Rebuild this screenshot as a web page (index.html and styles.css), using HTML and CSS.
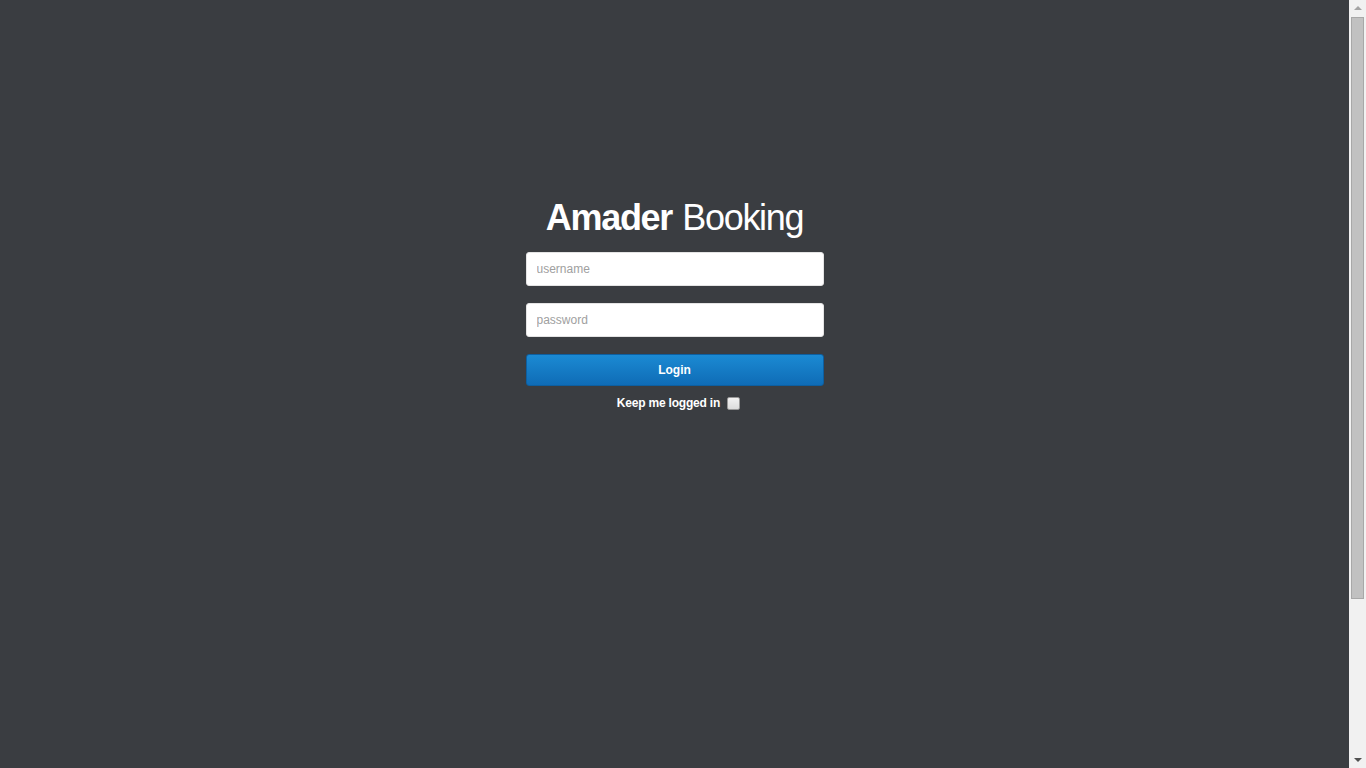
FILE: index.html
```html
<!DOCTYPE html>
<html>
<head>
<meta charset="utf-8">
<title>Amader Booking</title>
<link rel="stylesheet" href="styles.css">
</head>
<body>
<div class="page">
  <form class="login">
    <h1 class="title"><b>Amader</b> Booking</h1>
    <input class="field" type="text" placeholder="username">
    <input class="field" type="password" placeholder="password">
    <button class="btn" type="button">Login</button>
    <label class="keep">Keep me logged in <span class="box"></span></label>
  </form>
</div>
<div class="scrollbar" aria-hidden="true">
  <span class="arrow up"></span>
  <span class="thumb"></span>
  <span class="arrow down"></span>
</div>
</body>
</html>
```

FILE: styles.css
```css
html, body {
  margin: 0;
  padding: 0;
  background: #3a3d41;
  overflow: hidden;
}
body {
  font-family: "Liberation Sans", Arial, sans-serif;
  padding-right: 17px;
}
.page {
  height: 768px;
  display: flex;
  justify-content: center;
}
.login {
  width: 298px;
  margin-top: 196px;
  display: flex;
  flex-direction: column;
  align-items: stretch;
}
.title {
  margin: 0 0 14px;
  font-size: 36px;
  line-height: 43px;
  font-weight: normal;
  color: #fff;
  text-align: center;
  letter-spacing: -1.3px;
  word-spacing: 1.5px;
}
.title b {
  font-weight: bold;
}
.field {
  box-sizing: border-box;
  height: 34px;
  margin: -1px 0 18px;
  padding: 0 10px;
  border: 1px solid #e4e4e4;
  border-radius: 3px;
  background: #fff;
  font-family: "Liberation Sans", Arial, sans-serif;
  font-size: 12px;
  color: #333;
  outline: none;
}
.field::placeholder {
  color: #a0a0a0;
}
.btn {
  box-sizing: border-box;
  height: 32px;
  margin: -1px 0 0;
  padding: 0;
  border: 1px solid #0d5fa0;
  border-radius: 3px;
  background: linear-gradient(#1b8ad3, #0f6cb6);
  color: #fff;
  font-family: "Liberation Sans", Arial, sans-serif;
  font-size: 12px;
  font-weight: bold;
  cursor: pointer;
}
.keep {
  margin-top: 10px;
  padding-left: 8px;
  display: flex;
  justify-content: center;
  align-items: center;
  gap: 7px;
  color: #fff;
  font-size: 12px;
  font-weight: bold;
  letter-spacing: -0.2px;
}
.box {
  width: 11px;
  height: 11px;
  border: 1px solid #999;
  border-radius: 2px;
  background: linear-gradient(#f2f2f2, #dcdcdc);
}
.scrollbar {
  position: fixed;
  top: 0;
  right: 0;
  width: 17px;
  height: 100%;
  background: #f1f1f1;
  display: flex;
  flex-direction: column;
  align-items: center;
}
.arrow {
  width: 0;
  height: 0;
  border-left: 4px solid transparent;
  border-right: 4px solid transparent;
}
.arrow.up {
  margin: 6px 0 6px;
  border-bottom: 4px solid #a3a3a3;
}
.arrow.down {
  margin: auto 0 6px;
  border-top: 4px solid #505050;
}
.thumb {
  box-sizing: border-box;
  width: 13px;
  height: 582px;
  margin-top: 1px;
  background: #c1c1c1;
  border: 1px solid #a8a8a8;
}
```
